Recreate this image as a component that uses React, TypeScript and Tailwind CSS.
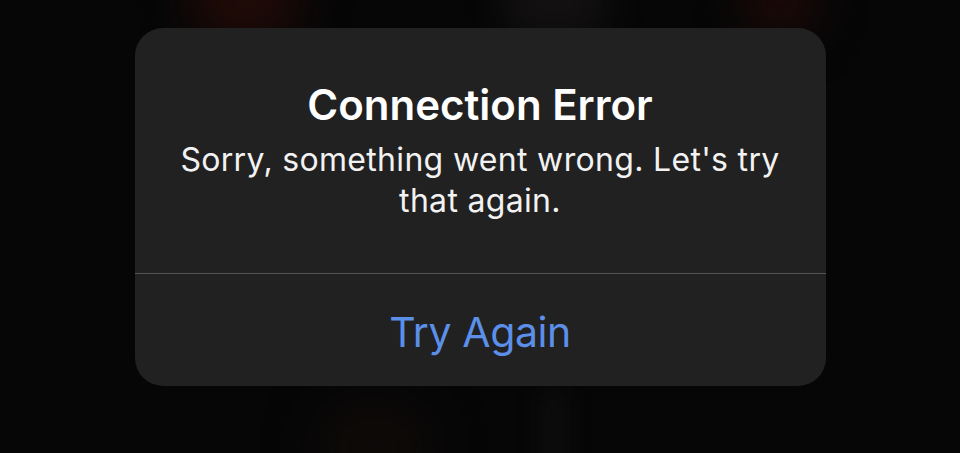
export default function App() {
  return (
    <main className="relative h-[453px] w-full overflow-hidden bg-[#060607] font-['Inter','Liberation_Sans',Arial,sans-serif]">
      {/* blurred photo behind the alert */}
      <div className="absolute inset-0">
        <div className="absolute left-[190px] top-[-40px] h-[80px] w-[110px] rounded-full bg-[#220b07] blur-xl" />
        <div className="absolute left-[500px] top-[-30px] h-[70px] w-[110px] rounded-full bg-[#121010] blur-lg" />
        <div className="absolute left-[745px] top-[-40px] h-[80px] w-[70px] rounded-full bg-[#1e0a07] blur-xl" />
        <div className="absolute left-[315px] top-[400px] h-[90px] w-[120px] rounded-full bg-[#0e0a08] blur-xl" />
        <div className="absolute left-[545px] top-[390px] h-[90px] w-[18px] bg-[#101011] blur-md" />
      </div>

      <div className="relative flex justify-center pt-[28px]">
        <div className="flex h-[358px] w-[691px] flex-col overflow-hidden rounded-[28px] bg-[#212121]">
          <div className="flex h-[245px] flex-col items-center px-[40px] pt-[53px] text-center">
            <h1 className="text-[42px] font-semibold leading-[48px] text-white">Connection Error</h1>
            <p className="mt-[10px] text-[32px] leading-[41px] tracking-[0.01em] text-[#f2f2f2]">
              Sorry, something went wrong. Let's try that again.
            </p>
          </div>
          <div className="h-px bg-[#545454]" />
          <button className="flex flex-1 items-center justify-center pt-[4px] text-[41px] leading-[50px] tracking-[-0.01em] text-[#5b8fe8]">
            Try Again
          </button>
        </div>
      </div>
    </main>
  );
}
